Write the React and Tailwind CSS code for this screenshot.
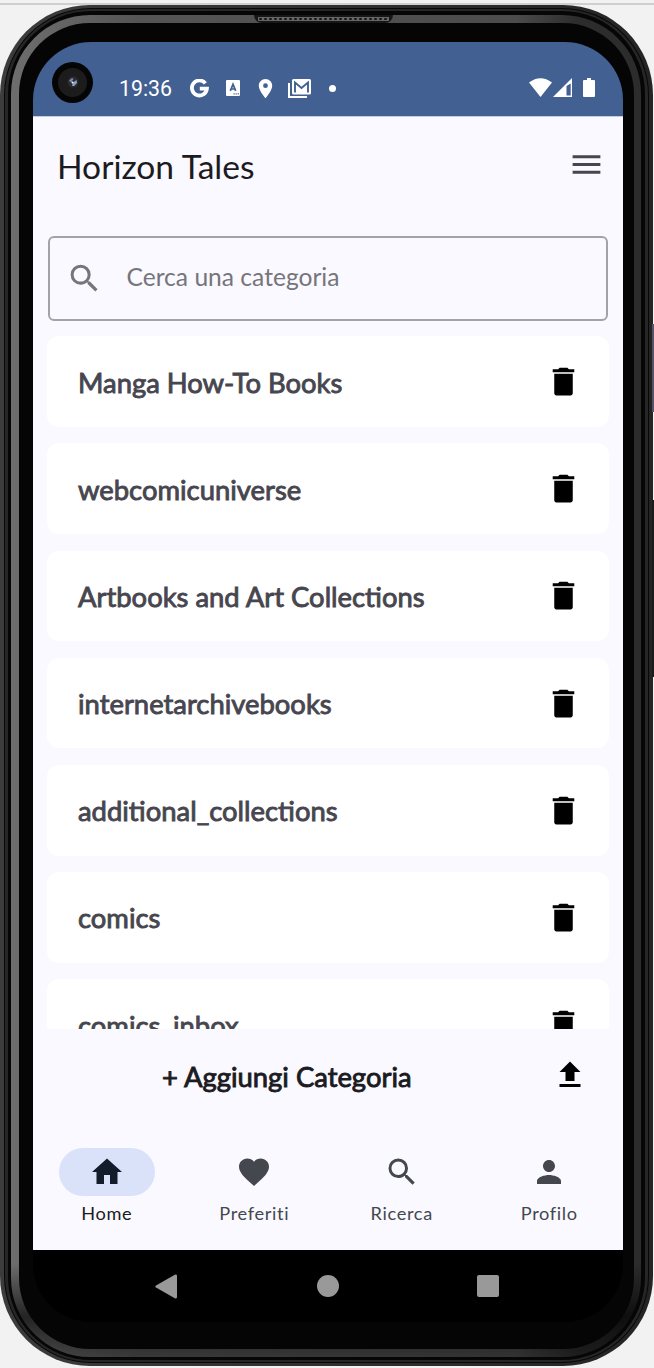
const paths = {
  search:
    "M15.5 14h-.79l-.28-.27A6.471 6.471 0 0 0 16 9.5 6.5 6.5 0 1 0 9.5 16c1.61 0 3.09-.59 4.23-1.57l.27.28v.79l5 4.99L20.49 19l-4.99-5zm-6 0C7.01 14 5 11.99 5 9.5S7.01 5 9.5 5 14 7.01 14 9.5 11.99 14 9.5 14z",
  trash:
    "M6 19.6c0 .8.6 1.4 1.4 1.4h9.2c.8 0 1.4-.6 1.4-1.4V7H6v12.6zM19 4h-3.5l-1-1h-5l-1 1H5v2h14V4z",
  upload: "M5 20h14v-2H5v2zM5 10h4v6h6v-6h4l-7-7-7 7z",
  home: "M10 20v-6h4v6h5v-8h3L12 3 2 12h3v8z",
  heart:
    "M12 21.35l-1.45-1.32C5.4 15.36 2 12.28 2 8.5 2 5.42 4.42 3 7.5 3c1.74 0 3.41.81 4.5 2.09C13.09 3.81 14.76 3 16.5 3 19.58 3 22 5.42 22 8.5c0 3.78-3.4 6.86-8.55 11.54L12 21.35z",
  person:
    "M12 12c2.21 0 4-1.79 4-4s-1.79-4-4-4-4 1.79-4 4 1.79 4 4 4zm0 2c-2.67 0-8 1.34-8 4v2h16v-2c0-2.66-5.33-4-8-4z",
  menu: "M3 18h18v-2H3v2zm0-5h18v-2H3v2zm0-7v2h18V6H3z",
  pin: "M12 2C8.13 2 5 5.13 5 9c0 5.25 7 13 7 13s7-7.75 7-13c0-3.87-3.13-7-7-7zm0 9.5a2.5 2.5 0 0 1 0-5 2.5 2.5 0 0 1 0 5z",
};

function Icon({ name, className }) {
  return (
    <svg viewBox="0 0 24 24" fill="currentColor" className={className}>
      <path d={paths[name]} />
    </svg>
  );
}

const categories = [
  "Manga How-To Books",
  "webcomicuniverse",
  "Artbooks and Art Collections",
  "internetarchivebooks",
  "additional_collections",
  "comics",
  "comics_inbox",
];

const tabs = [
  { label: "Home", icon: "home", active: true },
  { label: "Preferiti", icon: "heart" },
  { label: "Ricerca", icon: "search" },
  { label: "Profilo", icon: "person" },
];

function Status() {
  return (
    <div className="flex h-[74px] shrink-0 items-center bg-[#426091] pl-[19px] pt-[18px] text-white">
      <div className="-mt-[12px] flex size-[41px] shrink-0 items-center justify-center rounded-full bg-[#050505]">
        <div className="flex size-[29px] items-center justify-center rounded-full bg-[#1c1c1c]">
          <svg viewBox="0 0 12 12" className="size-3">
            <circle cx="6" cy="6" r="5.5" fill="#2b2c30" />
            <path d="M2 4.5 5 2l1.500 1L4 6.500z" fill="#7888ae" />
            <path d="M6 6.500 9.500 4l.5 3-3 3H5z" fill="#8da0c8" />
            <circle cx="5.500" cy="6.500" r="1" fill="#fff" />
          </svg>
        </div>
      </div>
      <div className="ml-[26px] w-[52px] shrink-0 whitespace-nowrap pt-px font-['Roboto',sans-serif] text-[21.300px] leading-7">
        19:36
      </div>
      <svg viewBox="0 0 19 19" className="ml-[19px] h-[19px] w-[19px] shrink-0">
        <path d="M15.400 4.400A7.500 7.500 0 1 0 16.900 9.700H9.800" fill="none" stroke="#fff" strokeWidth="3.800" />
      </svg>
      <svg viewBox="0 0 14 16" className="ml-[17px] h-4 w-[14px] shrink-0">
        <rect width="14" height="16" rx="1" fill="#fff" />
        <path d="M4.300 10.800 7 4.300 9.700 10.800M5.200 9h3.600" fill="none" stroke="#426091" strokeWidth="1.700" />
        <path d="M7.500 13.800h5.500" stroke="#426091" strokeWidth="1.200" strokeDasharray="1.200 .9" />
      </svg>
      <Icon name="pin" className="ml-[14px] size-[23px] shrink-0" />
      <svg viewBox="0 0 23 19" className="ml-[11px] h-[19px] w-[23px] shrink-0">
        <path d="M1 4v14h18" fill="none" stroke="#fff" strokeWidth="2" />
        <rect x="4" y="0" width="19" height="15.500" rx="1.500" fill="#fff" />
        <path d="M7 13.500V3.500l6.500 5.500L20 3.500v10" fill="none" stroke="#426091" strokeWidth="1.900" />
      </svg>
      <div className="ml-[18px] size-[7px] shrink-0 rounded-full bg-white" />
      <svg viewBox="0 0 67 20" className="ml-[193px] h-5 w-[67px] shrink-0" fill="#fff">
        <path d="M0 4.500Q11.500-4 23 4.500L11.500 19z" />
        <path fillRule="evenodd" d="M43 0v19H24zM37.500 8v9.500H41.700V5.500z" />
        <path d="M58 0h4v2h3q1 0 1 1v15q0 1-1 1H55q-1 0-1-1V3q0-1 1-1h3z" />
      </svg>
    </div>
  );
}

function Category({ name }) {
  return (
    <div className="flex h-[90.500px] shrink-0 items-center justify-between rounded-xl bg-white pl-[31px] pr-[27px]">
      <span className="whitespace-nowrap pt-[2px] text-[27.400px] leading-8 text-[#47464f] [-webkit-text-stroke:0.9px_#47464f]">
        {name}
      </span>
      <Icon name="trash" className="size-[37px] text-black" />
    </div>
  );
}

function Screen() {
  return (
    <div className="flex h-[1280px] w-[590px] flex-col overflow-hidden rounded-[58px] bg-black">
      <Status />
      <div className="flex h-[1134px] flex-col border-t border-[#c3cbe0] bg-[#faf9ff]">
        <header className="flex h-[119px] shrink-0 items-start justify-between pl-[24px] pr-[18px] pt-[29px]">
          <h1 className="pt-px text-[33.600px] leading-[39px] text-[#1b1b21]">Horizon Tales</h1>
          <Icon name="menu" className="size-[37px] text-[#47464f]" />
        </header>
        <div className="mx-[15px] flex h-[84.500px] shrink-0 items-center rounded-md border-2 border-[#a3a2a9] pl-[16px] text-[#76757b]">
          <Icon name="search" className="size-[37px]" />
          <span className="ml-[23.500px] pb-[3px] text-[24.600px] leading-8">Cerca una categoria</span>
        </div>
        <div className="mx-[14px] mt-[15.800px] flex h-[692.700px] shrink-0 flex-col gap-[16.700px] overflow-hidden">
          {categories.map((c) => (
            <Category key={c} name={c} />
          ))}
        </div>
        <div className="flex h-[92px] shrink-0 items-center justify-between pl-[129px] pr-[35px]">
          <span className="whitespace-nowrap pt-[4px] text-[27.400px] leading-8 text-[#1b1b21] [-webkit-text-stroke:0.9px_#1b1b21]">
            + Aggiungi Categoria
          </span>
          <Icon name="upload" className="size-9 text-black" />
        </div>
        <nav className="grid h-[129px] grid-cols-4 pt-[27px]">
          {tabs.map((t) => (
            <div key={t.label} className="flex flex-col items-center">
              <div
                className={
                  t.active
                    ? "flex h-12 w-24 items-center justify-center rounded-full bg-[#dae2f9] text-[#131c2b]"
                    : "flex h-12 w-24 items-center justify-center text-[#44474e]"
                }
              >
                <Icon name={t.icon} className="size-9" />
              </div>
              <span
                className={
                  t.active
                    ? "mt-[5px] text-[18.200px] leading-6 tracking-[0.650px] text-[#1b1b21]"
                    : "mt-[5px] text-[18.200px] leading-6 tracking-[0.650px] text-[#44474e]"
                }
              >
                {t.label}
              </span>
            </div>
          ))}
        </nav>
      </div>
      <div className="flex h-[72px] items-center pl-[122px]">
        <svg viewBox="0 0 22 25" className="h-[25px] w-[22px]" fill="#999">
          <path d="M1 11.500 19.800.8Q22 0 22 2v21q0 2-2.200 1.200L1 13.500q-1.500-1 0-2z" />
        </svg>
        <div className="ml-[140px] size-[22px] rounded-full bg-[#999]" />
        <div className="ml-[137.500px] size-[22.500px] rounded-[2px] bg-[#999]" />
      </div>
    </div>
  );
}

export default function App() {
  return (
    <div className="relative h-[1368px] w-[654px] overflow-hidden bg-[#f2f2f2] font-['Lato','Liberation_Sans',sans-serif]">
      <div className="h-[5px] border-b-2 border-[#cfcfcf]" />
      <div className="h-[1361px] w-[653px] rounded-[90px] bg-linear-to-r from-[#3c3c3c] to-[#242424] pt-[3px] pr-[4px] pb-[3px] pl-[4px]">
        <div className="h-full rounded-[87px] bg-[#080808] p-px">
          <div className="h-full rounded-[86px] bg-[#262626] pt-[2px] pr-[3px] pb-[2px] pl-[3px]">
            <div className="h-full rounded-[83px] bg-[#060606] pt-[4px] pr-[4px] pb-[3px] pl-[3px]">
              <div className="h-full rounded-[79px] bg-[linear-gradient(to_bottom,transparent_93%,#000000aa_97%,#00000055_100%),linear-gradient(to_right,#6e6e6e,#555_20%,#4c4c4c_80%,#2c2c2c_90%)] pt-[8px] pr-[7px] pb-[8px] pl-[8px]">
                <div className="h-full rounded-[71px] bg-[#050505] pt-[19px] pl-[14px]">
                  <Screen />
                </div>
              </div>
            </div>
          </div>
        </div>
      </div>
      <div className="absolute left-[254px] top-[15px] h-2 w-[139px] rounded-b-lg bg-[#161616] px-1 pt-[2px]">
        <div className="h-1 bg-[radial-gradient(circle,#161616_1px,#666_1.500px)] bg-[length:5px_4px]" />
      </div>
      <div className="absolute left-[652px] top-[324px] h-[88px] w-[2px] bg-[#55536a]" />
      <div className="absolute left-[652px] top-[500px] h-[177px] w-[2px] bg-[#1c1c1c]" />
    </div>
  );
}
